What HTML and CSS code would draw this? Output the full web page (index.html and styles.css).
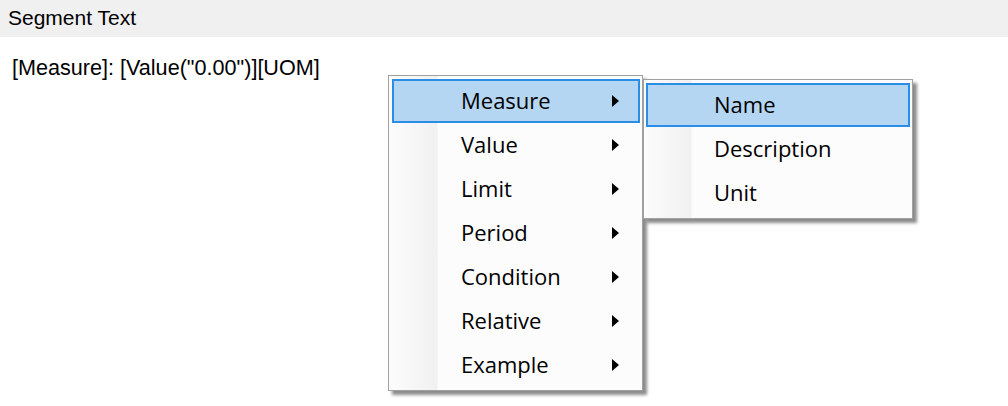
FILE: index.html
```html
<!DOCTYPE html>
<html>
<head>
<meta charset="utf-8">
<link rel="stylesheet" href="styles.css">
</head>
<body>
<div class="header">Segment Text</div>
<div class="content">[Measure]: [Value("0.00")][UOM]</div>

<div class="menu menu-main">
  <div class="item active"><span class="label">Measure</span><span class="arrow"></span></div>
  <div class="item"><span class="label">Value</span><span class="arrow"></span></div>
  <div class="item"><span class="label">Limit</span><span class="arrow"></span></div>
  <div class="item"><span class="label">Period</span><span class="arrow"></span></div>
  <div class="item"><span class="label">Condition</span><span class="arrow"></span></div>
  <div class="item"><span class="label">Relative</span><span class="arrow"></span></div>
  <div class="item"><span class="label">Example</span><span class="arrow"></span></div>
</div>

<div class="menu menu-sub">
  <div class="item active"><span class="label">Name</span></div>
  <div class="item"><span class="label">Description</span></div>
  <div class="item"><span class="label">Unit</span></div>
</div>
</body>
</html>
```
FILE: styles.css
```css
html, body {
  margin: 0;
  padding: 0;
  background: #ffffff;
  width: 1008px;
  height: 406px;
  overflow: hidden;
  position: relative;
}
.header {
  height: 37px;
  background: #f0f0f0;
  font-family: "Liberation Sans", Arial, sans-serif;
  font-size: 21px;
  color: #000;
  padding-left: 8px;
  line-height: 36px;
  box-sizing: border-box;
}
.content {
  font-family: "Liberation Sans", Arial, sans-serif;
  font-size: 21.6px;
  color: #000;
  padding: 18px 0 0 12px;
}
.menu {
  position: absolute;
  box-sizing: border-box;
  border: 1px solid #a0a0a0;
  background-color: #fcfcfc;
  padding: 3px 2px 3px 3px;
  box-shadow: 4px 4px 3px rgba(0, 0, 0, 0.45);
  font-family: "Open Sans", "Noto Sans", sans-serif;
  font-size: 22px;
  color: #000;
}
.menu-main {
  left: 388px;
  top: 75px;
  width: 255px;
  height: 316px;
  background-image: linear-gradient(to right, #fcfcfc 0px, #f1f1f1 46px, #f1f1f1 47px, #fcfcfc 48px);
  background-size: 49px 100%;
  background-repeat: no-repeat;
  background-position: 1px 0;
}
.menu-sub {
  left: 643px;
  top: 79px;
  width: 270px;
  height: 140px;
  padding-left: 2px;
  background-image: linear-gradient(to right, #fcfcfc 0px, #f1f1f1 46px, #f1f1f1 47px, #fcfcfc 48px);
  background-size: 49px 100%;
  background-repeat: no-repeat;
  background-position: 0 0;
}
.item {
  height: 44px;
  display: flex;
  align-items: center;
  box-sizing: border-box;
  border: 2px solid transparent;
  padding-left: 67px;
}
.menu-sub .item {
  padding-left: 66px;
}
.item.active {
  background: #b5d6f3;
  border-color: #2a8de6;
}
.label {
  flex: 1;
  line-height: 44px;
  margin-top: -2px;
}
.arrow {
  width: 0;
  height: 0;
  border-top: 6px solid transparent;
  border-bottom: 6px solid transparent;
  border-left: 7px solid #000;
  margin-right: 19px;
}
```
